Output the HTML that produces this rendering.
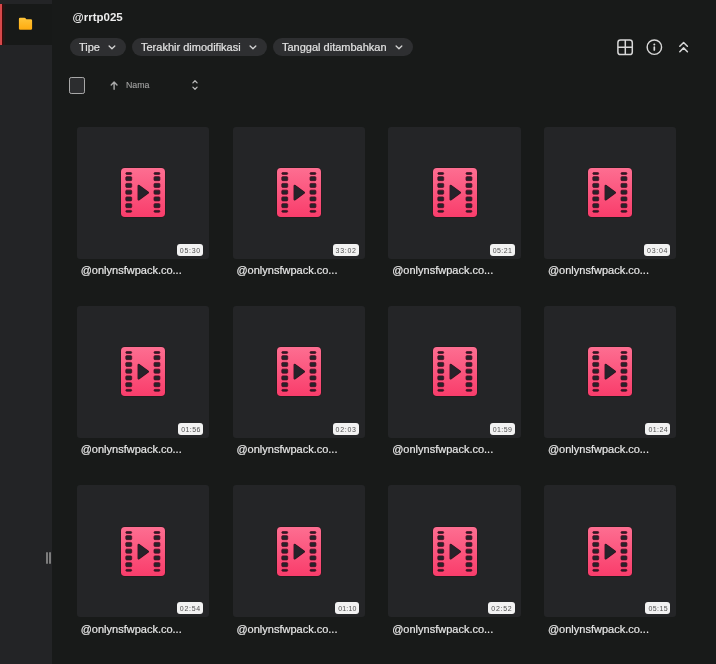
<!DOCTYPE html>
<html><head><meta charset="utf-8"><style>
*{margin:0;padding:0;box-sizing:border-box}
html,body{width:716px;height:664px;overflow:hidden;background:#181a19;-webkit-font-smoothing:antialiased;font-family:"Liberation Sans",sans-serif}
.sidebar{position:absolute;left:0;top:0;width:52px;height:664px;background:#232426}
.active{position:absolute;left:0;top:4px;width:52px;height:41px;background:#171918}
.redbar{position:absolute;left:0;top:4px;width:2px;height:41px;background:#d6484a}
.abs{position:absolute}
.h1{position:absolute;left:72.5px;top:10.5px;font-size:11.5px;font-weight:bold;color:#ececec}
.chip{position:absolute;top:38px;height:18px;border-radius:9px;background:#2e2f31;color:#e2e2e2;font-size:11px;line-height:18px;padding-left:9px;-webkit-text-stroke:0.2px #e2e2e2}
.chip svg{position:absolute;top:6px}
.card{position:absolute;width:132.3px;height:132px;background:#242527;border-radius:3px}
.film{position:absolute;left:43.4px;top:40.3px}
.badge{position:absolute;right:6px;bottom:3px;width:26px;height:12px;border-radius:3px;background:#f2f2f2;color:#505050;font-size:7px;letter-spacing:0.75px;text-indent:0.75px;line-height:14.2px;text-align:center}
.title{position:absolute;font-size:11px;color:#e6e6e6;line-height:14px;-webkit-text-stroke:0.2px #e6e6e6}
</style></head><body><div id="root" style="position:absolute;left:0;top:0;width:716px;height:664px;will-change:transform">
<div class="sidebar"></div>
<div class="active"></div>
<div class="redbar"></div><div class="abs" style="left:2px;top:4px;width:1px;height:41px;background:#3e0808"></div><div class="abs" style="left:3px;top:4px;width:1.5px;height:41px;background:#241716"></div>
<svg class="abs" style="left:18px;top:17px" width="15" height="14" viewBox="0 0 15 14"><defs><linearGradient id="fg" x1="0" y1="0" x2="0" y2="1"><stop offset="0" stop-color="#ffc53a"/><stop offset="1" stop-color="#ffab0f"/></linearGradient></defs><path d="M0.9 2 Q0.9 0.7 2.2 0.7 L6.3 0.7 Q6.9 0.7 7.3 1.1 L8.3 2.3 L12.8 2.3 Q14.1 2.3 14.1 3.6 L14.1 11.4 Q14.1 12.7 12.8 12.7 L2.2 12.7 Q0.9 12.7 0.9 11.4 Z" fill="url(#fg)"/></svg>
<div class="abs" style="left:45.8px;top:551.8px;width:1.8px;height:12.4px;background:#7c7c7c;border-radius:1px"></div>
<div class="abs" style="left:49px;top:551.8px;width:1.8px;height:12.4px;background:#7c7c7c;border-radius:1px"></div>

<div class="h1">@rrtp025</div>
<div class="chip" style="left:70px;width:56px">Tipe<span></span></div>
<div class="chip" style="left:132px;width:135px">Terakhir dimodifikasi</div>
<div class="chip" style="left:273px;width:140px">Tanggal ditambahkan</div>
<svg class="abs" style="left:107.5px;top:44.5px" width="8" height="5.5" viewBox="0 0 8 5.5"><path d="M1.1 1.0 L3.95 3.75 L6.8 1.0" stroke="#d4d4d4" stroke-width="1.3" fill="none" stroke-linecap="round" stroke-linejoin="round"/></svg>
<svg class="abs" style="left:249.0px;top:44.5px" width="8" height="5.5" viewBox="0 0 8 5.5"><path d="M1.1 1.0 L3.95 3.75 L6.8 1.0" stroke="#d4d4d4" stroke-width="1.3" fill="none" stroke-linecap="round" stroke-linejoin="round"/></svg>
<svg class="abs" style="left:394.5px;top:44.5px" width="8" height="5.5" viewBox="0 0 8 5.5"><path d="M1.1 1.0 L3.95 3.75 L6.8 1.0" stroke="#d4d4d4" stroke-width="1.3" fill="none" stroke-linecap="round" stroke-linejoin="round"/></svg>

<svg class="abs" style="left:616.5px;top:39px" width="17" height="17" viewBox="0 0 17 17"><rect x="0.9" y="1.1" width="14.4" height="14.5" rx="2.6" fill="none" stroke="#d8d8d8" stroke-width="1.5"/><path d="M8.3 1.1V15.6M0.9 8.35H15.3" stroke="#d8d8d8" stroke-width="1.5"/></svg>
<svg class="abs" style="left:645px;top:38px" width="18" height="18" viewBox="0 0 18 18"><circle cx="9.35" cy="9.15" r="7.2" fill="none" stroke="#d8d8d8" stroke-width="1.45"/><circle cx="9.3" cy="6.5" r="1" fill="#d8d8d8"/><path d="M9.3 9V12" stroke="#d8d8d8" stroke-width="1.7" stroke-linecap="round"/></svg>
<svg class="abs" style="left:677px;top:40px" width="13" height="14" viewBox="0 0 13 14"><path d="M2.8 6.3L6.6 2.5L10.4 6.3M2.8 11.7L6.6 7.9L10.4 11.7" stroke="#d8d8d8" stroke-width="1.5" fill="none" stroke-linecap="round" stroke-linejoin="round"/></svg>

<div class="abs" style="left:68.6px;top:76.8px;width:16.7px;height:17.1px;border:1.5px solid #a8a8a8;border-radius:2.2px;background:#2c2d2f"></div>
<svg class="abs" style="left:109.5px;top:81px" width="9" height="10" viewBox="0 0 9 10"><path d="M4.1 8.3V1M1.2 3.9L4.1 1L7 3.9" stroke="#aaa" stroke-width="1.4" fill="none" stroke-linecap="round" stroke-linejoin="round"/></svg>
<div class="abs" style="left:125.7px;top:79.2px;font-size:9.8px;color:#a4a4a4;line-height:12.4px;-webkit-text-stroke:0.1px #a4a4a4;transform:scaleX(0.9);transform-origin:0 0">Nama</div>
<svg class="abs" style="left:190.5px;top:79px" width="8" height="12" viewBox="0 0 8 12"><path d="M1.9 3.9L4 1.7L6.1 3.9M1.9 8.1L4 10.3L6.1 8.1" stroke="#bbb" stroke-width="1.25" fill="none" stroke-linecap="round" stroke-linejoin="round"/></svg>
<div class="card" style="left:76.8px;top:126.7px"><svg class="film" width="46" height="51" viewBox="-1 -1 46 51" style="overflow:visible"><defs><linearGradient id="g0" x1="0" y1="0" x2="0" y2="1"><stop offset="0" stop-color="#fd6e91"/><stop offset="1" stop-color="#f93d6b"/></linearGradient></defs><rect x="-0.5" y="-0.5" width="45" height="50" rx="4.3" fill="#2a1219"/><rect x="0" y="0" width="44" height="49" rx="3.8" fill="url(#g0)"/><rect x="4.8" y="4.6" width="5.9" height="1.8" rx="0.9" fill="#26232a" stroke="#4a0c22" stroke-width="0.8"/><rect x="4.8" y="8.65" width="5.9" height="4.0" rx="0.9" fill="#26232a" stroke="#4a0c22" stroke-width="0.8"/><rect x="4.8" y="15.4" width="5.9" height="4.0" rx="0.9" fill="#26232a" stroke="#4a0c22" stroke-width="0.8"/><rect x="4.8" y="22.15" width="5.9" height="4.0" rx="0.9" fill="#26232a" stroke="#4a0c22" stroke-width="0.8"/><rect x="4.8" y="28.9" width="5.9" height="4.0" rx="0.9" fill="#26232a" stroke="#4a0c22" stroke-width="0.8"/><rect x="4.8" y="35.65" width="5.9" height="4.0" rx="0.9" fill="#26232a" stroke="#4a0c22" stroke-width="0.8"/><rect x="4.8" y="42.4" width="5.9" height="1.8" rx="0.9" fill="#26232a" stroke="#4a0c22" stroke-width="0.8"/><rect x="33.0" y="4.6" width="5.9" height="1.8" rx="0.9" fill="#26232a" stroke="#4a0c22" stroke-width="0.8"/><rect x="33.0" y="8.65" width="5.9" height="4.0" rx="0.9" fill="#26232a" stroke="#4a0c22" stroke-width="0.8"/><rect x="33.0" y="15.4" width="5.9" height="4.0" rx="0.9" fill="#26232a" stroke="#4a0c22" stroke-width="0.8"/><rect x="33.0" y="22.15" width="5.9" height="4.0" rx="0.9" fill="#26232a" stroke="#4a0c22" stroke-width="0.8"/><rect x="33.0" y="28.9" width="5.9" height="4.0" rx="0.9" fill="#26232a" stroke="#4a0c22" stroke-width="0.8"/><rect x="33.0" y="35.65" width="5.9" height="4.0" rx="0.9" fill="#26232a" stroke="#4a0c22" stroke-width="0.8"/><rect x="33.0" y="42.4" width="5.9" height="1.8" rx="0.9" fill="#26232a" stroke="#4a0c22" stroke-width="0.8"/><path d="M17.7 17.9 L26.9 24.6 L17.7 31.4 Z" fill="#26232a" stroke="#3a0c1c" stroke-width="2.3" stroke-linejoin="round"/><path d="M17.7 17.9 L26.9 24.6 L17.7 31.4 Z" fill="#26232a" stroke="#26232a" stroke-width="1.3" stroke-linejoin="round"/></svg><div class="badge" style="width:26.2px;letter-spacing:0.75px">05:30</div></div><div class="title" style="left:80.70px;top:262.90px">@onlynsfwpack.co...</div><div class="card" style="left:232.55px;top:126.7px"><svg class="film" width="46" height="51" viewBox="-1 -1 46 51" style="overflow:visible"><defs><linearGradient id="g1" x1="0" y1="0" x2="0" y2="1"><stop offset="0" stop-color="#fd6e91"/><stop offset="1" stop-color="#f93d6b"/></linearGradient></defs><rect x="-0.5" y="-0.5" width="45" height="50" rx="4.3" fill="#2a1219"/><rect x="0" y="0" width="44" height="49" rx="3.8" fill="url(#g1)"/><rect x="4.8" y="4.6" width="5.9" height="1.8" rx="0.9" fill="#26232a" stroke="#4a0c22" stroke-width="0.8"/><rect x="4.8" y="8.65" width="5.9" height="4.0" rx="0.9" fill="#26232a" stroke="#4a0c22" stroke-width="0.8"/><rect x="4.8" y="15.4" width="5.9" height="4.0" rx="0.9" fill="#26232a" stroke="#4a0c22" stroke-width="0.8"/><rect x="4.8" y="22.15" width="5.9" height="4.0" rx="0.9" fill="#26232a" stroke="#4a0c22" stroke-width="0.8"/><rect x="4.8" y="28.9" width="5.9" height="4.0" rx="0.9" fill="#26232a" stroke="#4a0c22" stroke-width="0.8"/><rect x="4.8" y="35.65" width="5.9" height="4.0" rx="0.9" fill="#26232a" stroke="#4a0c22" stroke-width="0.8"/><rect x="4.8" y="42.4" width="5.9" height="1.8" rx="0.9" fill="#26232a" stroke="#4a0c22" stroke-width="0.8"/><rect x="33.0" y="4.6" width="5.9" height="1.8" rx="0.9" fill="#26232a" stroke="#4a0c22" stroke-width="0.8"/><rect x="33.0" y="8.65" width="5.9" height="4.0" rx="0.9" fill="#26232a" stroke="#4a0c22" stroke-width="0.8"/><rect x="33.0" y="15.4" width="5.9" height="4.0" rx="0.9" fill="#26232a" stroke="#4a0c22" stroke-width="0.8"/><rect x="33.0" y="22.15" width="5.9" height="4.0" rx="0.9" fill="#26232a" stroke="#4a0c22" stroke-width="0.8"/><rect x="33.0" y="28.9" width="5.9" height="4.0" rx="0.9" fill="#26232a" stroke="#4a0c22" stroke-width="0.8"/><rect x="33.0" y="35.65" width="5.9" height="4.0" rx="0.9" fill="#26232a" stroke="#4a0c22" stroke-width="0.8"/><rect x="33.0" y="42.4" width="5.9" height="1.8" rx="0.9" fill="#26232a" stroke="#4a0c22" stroke-width="0.8"/><path d="M17.7 17.9 L26.9 24.6 L17.7 31.4 Z" fill="#26232a" stroke="#3a0c1c" stroke-width="2.3" stroke-linejoin="round"/><path d="M17.7 17.9 L26.9 24.6 L17.7 31.4 Z" fill="#26232a" stroke="#26232a" stroke-width="1.3" stroke-linejoin="round"/></svg><div class="badge" style="width:26.2px;letter-spacing:0.75px">33:02</div></div><div class="title" style="left:236.45px;top:262.90px">@onlynsfwpack.co...</div><div class="card" style="left:388.3px;top:126.7px"><svg class="film" width="46" height="51" viewBox="-1 -1 46 51" style="overflow:visible"><defs><linearGradient id="g2" x1="0" y1="0" x2="0" y2="1"><stop offset="0" stop-color="#fd6e91"/><stop offset="1" stop-color="#f93d6b"/></linearGradient></defs><rect x="-0.5" y="-0.5" width="45" height="50" rx="4.3" fill="#2a1219"/><rect x="0" y="0" width="44" height="49" rx="3.8" fill="url(#g2)"/><rect x="4.8" y="4.6" width="5.9" height="1.8" rx="0.9" fill="#26232a" stroke="#4a0c22" stroke-width="0.8"/><rect x="4.8" y="8.65" width="5.9" height="4.0" rx="0.9" fill="#26232a" stroke="#4a0c22" stroke-width="0.8"/><rect x="4.8" y="15.4" width="5.9" height="4.0" rx="0.9" fill="#26232a" stroke="#4a0c22" stroke-width="0.8"/><rect x="4.8" y="22.15" width="5.9" height="4.0" rx="0.9" fill="#26232a" stroke="#4a0c22" stroke-width="0.8"/><rect x="4.8" y="28.9" width="5.9" height="4.0" rx="0.9" fill="#26232a" stroke="#4a0c22" stroke-width="0.8"/><rect x="4.8" y="35.65" width="5.9" height="4.0" rx="0.9" fill="#26232a" stroke="#4a0c22" stroke-width="0.8"/><rect x="4.8" y="42.4" width="5.9" height="1.8" rx="0.9" fill="#26232a" stroke="#4a0c22" stroke-width="0.8"/><rect x="33.0" y="4.6" width="5.9" height="1.8" rx="0.9" fill="#26232a" stroke="#4a0c22" stroke-width="0.8"/><rect x="33.0" y="8.65" width="5.9" height="4.0" rx="0.9" fill="#26232a" stroke="#4a0c22" stroke-width="0.8"/><rect x="33.0" y="15.4" width="5.9" height="4.0" rx="0.9" fill="#26232a" stroke="#4a0c22" stroke-width="0.8"/><rect x="33.0" y="22.15" width="5.9" height="4.0" rx="0.9" fill="#26232a" stroke="#4a0c22" stroke-width="0.8"/><rect x="33.0" y="28.9" width="5.9" height="4.0" rx="0.9" fill="#26232a" stroke="#4a0c22" stroke-width="0.8"/><rect x="33.0" y="35.65" width="5.9" height="4.0" rx="0.9" fill="#26232a" stroke="#4a0c22" stroke-width="0.8"/><rect x="33.0" y="42.4" width="5.9" height="1.8" rx="0.9" fill="#26232a" stroke="#4a0c22" stroke-width="0.8"/><path d="M17.7 17.9 L26.9 24.6 L17.7 31.4 Z" fill="#26232a" stroke="#3a0c1c" stroke-width="2.3" stroke-linejoin="round"/><path d="M17.7 17.9 L26.9 24.6 L17.7 31.4 Z" fill="#26232a" stroke="#26232a" stroke-width="1.3" stroke-linejoin="round"/></svg><div class="badge" style="width:24.9px;letter-spacing:0.45px">05:21</div></div><div class="title" style="left:392.20px;top:262.90px">@onlynsfwpack.co...</div><div class="card" style="left:544.05px;top:126.7px"><svg class="film" width="46" height="51" viewBox="-1 -1 46 51" style="overflow:visible"><defs><linearGradient id="g3" x1="0" y1="0" x2="0" y2="1"><stop offset="0" stop-color="#fd6e91"/><stop offset="1" stop-color="#f93d6b"/></linearGradient></defs><rect x="-0.5" y="-0.5" width="45" height="50" rx="4.3" fill="#2a1219"/><rect x="0" y="0" width="44" height="49" rx="3.8" fill="url(#g3)"/><rect x="4.8" y="4.6" width="5.9" height="1.8" rx="0.9" fill="#26232a" stroke="#4a0c22" stroke-width="0.8"/><rect x="4.8" y="8.65" width="5.9" height="4.0" rx="0.9" fill="#26232a" stroke="#4a0c22" stroke-width="0.8"/><rect x="4.8" y="15.4" width="5.9" height="4.0" rx="0.9" fill="#26232a" stroke="#4a0c22" stroke-width="0.8"/><rect x="4.8" y="22.15" width="5.9" height="4.0" rx="0.9" fill="#26232a" stroke="#4a0c22" stroke-width="0.8"/><rect x="4.8" y="28.9" width="5.9" height="4.0" rx="0.9" fill="#26232a" stroke="#4a0c22" stroke-width="0.8"/><rect x="4.8" y="35.65" width="5.9" height="4.0" rx="0.9" fill="#26232a" stroke="#4a0c22" stroke-width="0.8"/><rect x="4.8" y="42.4" width="5.9" height="1.8" rx="0.9" fill="#26232a" stroke="#4a0c22" stroke-width="0.8"/><rect x="33.0" y="4.6" width="5.9" height="1.8" rx="0.9" fill="#26232a" stroke="#4a0c22" stroke-width="0.8"/><rect x="33.0" y="8.65" width="5.9" height="4.0" rx="0.9" fill="#26232a" stroke="#4a0c22" stroke-width="0.8"/><rect x="33.0" y="15.4" width="5.9" height="4.0" rx="0.9" fill="#26232a" stroke="#4a0c22" stroke-width="0.8"/><rect x="33.0" y="22.15" width="5.9" height="4.0" rx="0.9" fill="#26232a" stroke="#4a0c22" stroke-width="0.8"/><rect x="33.0" y="28.9" width="5.9" height="4.0" rx="0.9" fill="#26232a" stroke="#4a0c22" stroke-width="0.8"/><rect x="33.0" y="35.65" width="5.9" height="4.0" rx="0.9" fill="#26232a" stroke="#4a0c22" stroke-width="0.8"/><rect x="33.0" y="42.4" width="5.9" height="1.8" rx="0.9" fill="#26232a" stroke="#4a0c22" stroke-width="0.8"/><path d="M17.7 17.9 L26.9 24.6 L17.7 31.4 Z" fill="#26232a" stroke="#3a0c1c" stroke-width="2.3" stroke-linejoin="round"/><path d="M17.7 17.9 L26.9 24.6 L17.7 31.4 Z" fill="#26232a" stroke="#26232a" stroke-width="1.3" stroke-linejoin="round"/></svg><div class="badge" style="width:26.2px;letter-spacing:0.75px">03:04</div></div><div class="title" style="left:547.95px;top:262.90px">@onlynsfwpack.co...</div><div class="card" style="left:76.8px;top:306.05px"><svg class="film" width="46" height="51" viewBox="-1 -1 46 51" style="overflow:visible"><defs><linearGradient id="g4" x1="0" y1="0" x2="0" y2="1"><stop offset="0" stop-color="#fd6e91"/><stop offset="1" stop-color="#f93d6b"/></linearGradient></defs><rect x="-0.5" y="-0.5" width="45" height="50" rx="4.3" fill="#2a1219"/><rect x="0" y="0" width="44" height="49" rx="3.8" fill="url(#g4)"/><rect x="4.8" y="4.6" width="5.9" height="1.8" rx="0.9" fill="#26232a" stroke="#4a0c22" stroke-width="0.8"/><rect x="4.8" y="8.65" width="5.9" height="4.0" rx="0.9" fill="#26232a" stroke="#4a0c22" stroke-width="0.8"/><rect x="4.8" y="15.4" width="5.9" height="4.0" rx="0.9" fill="#26232a" stroke="#4a0c22" stroke-width="0.8"/><rect x="4.8" y="22.15" width="5.9" height="4.0" rx="0.9" fill="#26232a" stroke="#4a0c22" stroke-width="0.8"/><rect x="4.8" y="28.9" width="5.9" height="4.0" rx="0.9" fill="#26232a" stroke="#4a0c22" stroke-width="0.8"/><rect x="4.8" y="35.65" width="5.9" height="4.0" rx="0.9" fill="#26232a" stroke="#4a0c22" stroke-width="0.8"/><rect x="4.8" y="42.4" width="5.9" height="1.8" rx="0.9" fill="#26232a" stroke="#4a0c22" stroke-width="0.8"/><rect x="33.0" y="4.6" width="5.9" height="1.8" rx="0.9" fill="#26232a" stroke="#4a0c22" stroke-width="0.8"/><rect x="33.0" y="8.65" width="5.9" height="4.0" rx="0.9" fill="#26232a" stroke="#4a0c22" stroke-width="0.8"/><rect x="33.0" y="15.4" width="5.9" height="4.0" rx="0.9" fill="#26232a" stroke="#4a0c22" stroke-width="0.8"/><rect x="33.0" y="22.15" width="5.9" height="4.0" rx="0.9" fill="#26232a" stroke="#4a0c22" stroke-width="0.8"/><rect x="33.0" y="28.9" width="5.9" height="4.0" rx="0.9" fill="#26232a" stroke="#4a0c22" stroke-width="0.8"/><rect x="33.0" y="35.65" width="5.9" height="4.0" rx="0.9" fill="#26232a" stroke="#4a0c22" stroke-width="0.8"/><rect x="33.0" y="42.4" width="5.9" height="1.8" rx="0.9" fill="#26232a" stroke="#4a0c22" stroke-width="0.8"/><path d="M17.7 17.9 L26.9 24.6 L17.7 31.4 Z" fill="#26232a" stroke="#3a0c1c" stroke-width="2.3" stroke-linejoin="round"/><path d="M17.7 17.9 L26.9 24.6 L17.7 31.4 Z" fill="#26232a" stroke="#26232a" stroke-width="1.3" stroke-linejoin="round"/></svg><div class="badge" style="width:24.9px;letter-spacing:0.45px">01:56</div></div><div class="title" style="left:80.70px;top:442.25px">@onlynsfwpack.co...</div><div class="card" style="left:232.55px;top:306.05px"><svg class="film" width="46" height="51" viewBox="-1 -1 46 51" style="overflow:visible"><defs><linearGradient id="g5" x1="0" y1="0" x2="0" y2="1"><stop offset="0" stop-color="#fd6e91"/><stop offset="1" stop-color="#f93d6b"/></linearGradient></defs><rect x="-0.5" y="-0.5" width="45" height="50" rx="4.3" fill="#2a1219"/><rect x="0" y="0" width="44" height="49" rx="3.8" fill="url(#g5)"/><rect x="4.8" y="4.6" width="5.9" height="1.8" rx="0.9" fill="#26232a" stroke="#4a0c22" stroke-width="0.8"/><rect x="4.8" y="8.65" width="5.9" height="4.0" rx="0.9" fill="#26232a" stroke="#4a0c22" stroke-width="0.8"/><rect x="4.8" y="15.4" width="5.9" height="4.0" rx="0.9" fill="#26232a" stroke="#4a0c22" stroke-width="0.8"/><rect x="4.8" y="22.15" width="5.9" height="4.0" rx="0.9" fill="#26232a" stroke="#4a0c22" stroke-width="0.8"/><rect x="4.8" y="28.9" width="5.9" height="4.0" rx="0.9" fill="#26232a" stroke="#4a0c22" stroke-width="0.8"/><rect x="4.8" y="35.65" width="5.9" height="4.0" rx="0.9" fill="#26232a" stroke="#4a0c22" stroke-width="0.8"/><rect x="4.8" y="42.4" width="5.9" height="1.8" rx="0.9" fill="#26232a" stroke="#4a0c22" stroke-width="0.8"/><rect x="33.0" y="4.6" width="5.9" height="1.8" rx="0.9" fill="#26232a" stroke="#4a0c22" stroke-width="0.8"/><rect x="33.0" y="8.65" width="5.9" height="4.0" rx="0.9" fill="#26232a" stroke="#4a0c22" stroke-width="0.8"/><rect x="33.0" y="15.4" width="5.9" height="4.0" rx="0.9" fill="#26232a" stroke="#4a0c22" stroke-width="0.8"/><rect x="33.0" y="22.15" width="5.9" height="4.0" rx="0.9" fill="#26232a" stroke="#4a0c22" stroke-width="0.8"/><rect x="33.0" y="28.9" width="5.9" height="4.0" rx="0.9" fill="#26232a" stroke="#4a0c22" stroke-width="0.8"/><rect x="33.0" y="35.65" width="5.9" height="4.0" rx="0.9" fill="#26232a" stroke="#4a0c22" stroke-width="0.8"/><rect x="33.0" y="42.4" width="5.9" height="1.8" rx="0.9" fill="#26232a" stroke="#4a0c22" stroke-width="0.8"/><path d="M17.7 17.9 L26.9 24.6 L17.7 31.4 Z" fill="#26232a" stroke="#3a0c1c" stroke-width="2.3" stroke-linejoin="round"/><path d="M17.7 17.9 L26.9 24.6 L17.7 31.4 Z" fill="#26232a" stroke="#26232a" stroke-width="1.3" stroke-linejoin="round"/></svg><div class="badge" style="width:26.2px;letter-spacing:0.75px">02:03</div></div><div class="title" style="left:236.45px;top:442.25px">@onlynsfwpack.co...</div><div class="card" style="left:388.3px;top:306.05px"><svg class="film" width="46" height="51" viewBox="-1 -1 46 51" style="overflow:visible"><defs><linearGradient id="g6" x1="0" y1="0" x2="0" y2="1"><stop offset="0" stop-color="#fd6e91"/><stop offset="1" stop-color="#f93d6b"/></linearGradient></defs><rect x="-0.5" y="-0.5" width="45" height="50" rx="4.3" fill="#2a1219"/><rect x="0" y="0" width="44" height="49" rx="3.8" fill="url(#g6)"/><rect x="4.8" y="4.6" width="5.9" height="1.8" rx="0.9" fill="#26232a" stroke="#4a0c22" stroke-width="0.8"/><rect x="4.8" y="8.65" width="5.9" height="4.0" rx="0.9" fill="#26232a" stroke="#4a0c22" stroke-width="0.8"/><rect x="4.8" y="15.4" width="5.9" height="4.0" rx="0.9" fill="#26232a" stroke="#4a0c22" stroke-width="0.8"/><rect x="4.8" y="22.15" width="5.9" height="4.0" rx="0.9" fill="#26232a" stroke="#4a0c22" stroke-width="0.8"/><rect x="4.8" y="28.9" width="5.9" height="4.0" rx="0.9" fill="#26232a" stroke="#4a0c22" stroke-width="0.8"/><rect x="4.8" y="35.65" width="5.9" height="4.0" rx="0.9" fill="#26232a" stroke="#4a0c22" stroke-width="0.8"/><rect x="4.8" y="42.4" width="5.9" height="1.8" rx="0.9" fill="#26232a" stroke="#4a0c22" stroke-width="0.8"/><rect x="33.0" y="4.6" width="5.9" height="1.8" rx="0.9" fill="#26232a" stroke="#4a0c22" stroke-width="0.8"/><rect x="33.0" y="8.65" width="5.9" height="4.0" rx="0.9" fill="#26232a" stroke="#4a0c22" stroke-width="0.8"/><rect x="33.0" y="15.4" width="5.9" height="4.0" rx="0.9" fill="#26232a" stroke="#4a0c22" stroke-width="0.8"/><rect x="33.0" y="22.15" width="5.9" height="4.0" rx="0.9" fill="#26232a" stroke="#4a0c22" stroke-width="0.8"/><rect x="33.0" y="28.9" width="5.9" height="4.0" rx="0.9" fill="#26232a" stroke="#4a0c22" stroke-width="0.8"/><rect x="33.0" y="35.65" width="5.9" height="4.0" rx="0.9" fill="#26232a" stroke="#4a0c22" stroke-width="0.8"/><rect x="33.0" y="42.4" width="5.9" height="1.8" rx="0.9" fill="#26232a" stroke="#4a0c22" stroke-width="0.8"/><path d="M17.7 17.9 L26.9 24.6 L17.7 31.4 Z" fill="#26232a" stroke="#3a0c1c" stroke-width="2.3" stroke-linejoin="round"/><path d="M17.7 17.9 L26.9 24.6 L17.7 31.4 Z" fill="#26232a" stroke="#26232a" stroke-width="1.3" stroke-linejoin="round"/></svg><div class="badge" style="width:24.9px;letter-spacing:0.45px">01:59</div></div><div class="title" style="left:392.20px;top:442.25px">@onlynsfwpack.co...</div><div class="card" style="left:544.05px;top:306.05px"><svg class="film" width="46" height="51" viewBox="-1 -1 46 51" style="overflow:visible"><defs><linearGradient id="g7" x1="0" y1="0" x2="0" y2="1"><stop offset="0" stop-color="#fd6e91"/><stop offset="1" stop-color="#f93d6b"/></linearGradient></defs><rect x="-0.5" y="-0.5" width="45" height="50" rx="4.3" fill="#2a1219"/><rect x="0" y="0" width="44" height="49" rx="3.8" fill="url(#g7)"/><rect x="4.8" y="4.6" width="5.9" height="1.8" rx="0.9" fill="#26232a" stroke="#4a0c22" stroke-width="0.8"/><rect x="4.8" y="8.65" width="5.9" height="4.0" rx="0.9" fill="#26232a" stroke="#4a0c22" stroke-width="0.8"/><rect x="4.8" y="15.4" width="5.9" height="4.0" rx="0.9" fill="#26232a" stroke="#4a0c22" stroke-width="0.8"/><rect x="4.8" y="22.15" width="5.9" height="4.0" rx="0.9" fill="#26232a" stroke="#4a0c22" stroke-width="0.8"/><rect x="4.8" y="28.9" width="5.9" height="4.0" rx="0.9" fill="#26232a" stroke="#4a0c22" stroke-width="0.8"/><rect x="4.8" y="35.65" width="5.9" height="4.0" rx="0.9" fill="#26232a" stroke="#4a0c22" stroke-width="0.8"/><rect x="4.8" y="42.4" width="5.9" height="1.8" rx="0.9" fill="#26232a" stroke="#4a0c22" stroke-width="0.8"/><rect x="33.0" y="4.6" width="5.9" height="1.8" rx="0.9" fill="#26232a" stroke="#4a0c22" stroke-width="0.8"/><rect x="33.0" y="8.65" width="5.9" height="4.0" rx="0.9" fill="#26232a" stroke="#4a0c22" stroke-width="0.8"/><rect x="33.0" y="15.4" width="5.9" height="4.0" rx="0.9" fill="#26232a" stroke="#4a0c22" stroke-width="0.8"/><rect x="33.0" y="22.15" width="5.9" height="4.0" rx="0.9" fill="#26232a" stroke="#4a0c22" stroke-width="0.8"/><rect x="33.0" y="28.9" width="5.9" height="4.0" rx="0.9" fill="#26232a" stroke="#4a0c22" stroke-width="0.8"/><rect x="33.0" y="35.65" width="5.9" height="4.0" rx="0.9" fill="#26232a" stroke="#4a0c22" stroke-width="0.8"/><rect x="33.0" y="42.4" width="5.9" height="1.8" rx="0.9" fill="#26232a" stroke="#4a0c22" stroke-width="0.8"/><path d="M17.7 17.9 L26.9 24.6 L17.7 31.4 Z" fill="#26232a" stroke="#3a0c1c" stroke-width="2.3" stroke-linejoin="round"/><path d="M17.7 17.9 L26.9 24.6 L17.7 31.4 Z" fill="#26232a" stroke="#26232a" stroke-width="1.3" stroke-linejoin="round"/></svg><div class="badge" style="width:24.9px;letter-spacing:0.45px">01:24</div></div><div class="title" style="left:547.95px;top:442.25px">@onlynsfwpack.co...</div><div class="card" style="left:76.8px;top:485.4px"><svg class="film" width="46" height="51" viewBox="-1 -1 46 51" style="overflow:visible"><defs><linearGradient id="g8" x1="0" y1="0" x2="0" y2="1"><stop offset="0" stop-color="#fd6e91"/><stop offset="1" stop-color="#f93d6b"/></linearGradient></defs><rect x="-0.5" y="-0.5" width="45" height="50" rx="4.3" fill="#2a1219"/><rect x="0" y="0" width="44" height="49" rx="3.8" fill="url(#g8)"/><rect x="4.8" y="4.6" width="5.9" height="1.8" rx="0.9" fill="#26232a" stroke="#4a0c22" stroke-width="0.8"/><rect x="4.8" y="8.65" width="5.9" height="4.0" rx="0.9" fill="#26232a" stroke="#4a0c22" stroke-width="0.8"/><rect x="4.8" y="15.4" width="5.9" height="4.0" rx="0.9" fill="#26232a" stroke="#4a0c22" stroke-width="0.8"/><rect x="4.8" y="22.15" width="5.9" height="4.0" rx="0.9" fill="#26232a" stroke="#4a0c22" stroke-width="0.8"/><rect x="4.8" y="28.9" width="5.9" height="4.0" rx="0.9" fill="#26232a" stroke="#4a0c22" stroke-width="0.8"/><rect x="4.8" y="35.65" width="5.9" height="4.0" rx="0.9" fill="#26232a" stroke="#4a0c22" stroke-width="0.8"/><rect x="4.8" y="42.4" width="5.9" height="1.8" rx="0.9" fill="#26232a" stroke="#4a0c22" stroke-width="0.8"/><rect x="33.0" y="4.6" width="5.9" height="1.8" rx="0.9" fill="#26232a" stroke="#4a0c22" stroke-width="0.8"/><rect x="33.0" y="8.65" width="5.9" height="4.0" rx="0.9" fill="#26232a" stroke="#4a0c22" stroke-width="0.8"/><rect x="33.0" y="15.4" width="5.9" height="4.0" rx="0.9" fill="#26232a" stroke="#4a0c22" stroke-width="0.8"/><rect x="33.0" y="22.15" width="5.9" height="4.0" rx="0.9" fill="#26232a" stroke="#4a0c22" stroke-width="0.8"/><rect x="33.0" y="28.9" width="5.9" height="4.0" rx="0.9" fill="#26232a" stroke="#4a0c22" stroke-width="0.8"/><rect x="33.0" y="35.65" width="5.9" height="4.0" rx="0.9" fill="#26232a" stroke="#4a0c22" stroke-width="0.8"/><rect x="33.0" y="42.4" width="5.9" height="1.8" rx="0.9" fill="#26232a" stroke="#4a0c22" stroke-width="0.8"/><path d="M17.7 17.9 L26.9 24.6 L17.7 31.4 Z" fill="#26232a" stroke="#3a0c1c" stroke-width="2.3" stroke-linejoin="round"/><path d="M17.7 17.9 L26.9 24.6 L17.7 31.4 Z" fill="#26232a" stroke="#26232a" stroke-width="1.3" stroke-linejoin="round"/></svg><div class="badge" style="width:26.2px;letter-spacing:0.75px">02:54</div></div><div class="title" style="left:80.70px;top:621.60px">@onlynsfwpack.co...</div><div class="card" style="left:232.55px;top:485.4px"><svg class="film" width="46" height="51" viewBox="-1 -1 46 51" style="overflow:visible"><defs><linearGradient id="g9" x1="0" y1="0" x2="0" y2="1"><stop offset="0" stop-color="#fd6e91"/><stop offset="1" stop-color="#f93d6b"/></linearGradient></defs><rect x="-0.5" y="-0.5" width="45" height="50" rx="4.3" fill="#2a1219"/><rect x="0" y="0" width="44" height="49" rx="3.8" fill="url(#g9)"/><rect x="4.8" y="4.6" width="5.9" height="1.8" rx="0.9" fill="#26232a" stroke="#4a0c22" stroke-width="0.8"/><rect x="4.8" y="8.65" width="5.9" height="4.0" rx="0.9" fill="#26232a" stroke="#4a0c22" stroke-width="0.8"/><rect x="4.8" y="15.4" width="5.9" height="4.0" rx="0.9" fill="#26232a" stroke="#4a0c22" stroke-width="0.8"/><rect x="4.8" y="22.15" width="5.9" height="4.0" rx="0.9" fill="#26232a" stroke="#4a0c22" stroke-width="0.8"/><rect x="4.8" y="28.9" width="5.9" height="4.0" rx="0.9" fill="#26232a" stroke="#4a0c22" stroke-width="0.8"/><rect x="4.8" y="35.65" width="5.9" height="4.0" rx="0.9" fill="#26232a" stroke="#4a0c22" stroke-width="0.8"/><rect x="4.8" y="42.4" width="5.9" height="1.8" rx="0.9" fill="#26232a" stroke="#4a0c22" stroke-width="0.8"/><rect x="33.0" y="4.6" width="5.9" height="1.8" rx="0.9" fill="#26232a" stroke="#4a0c22" stroke-width="0.8"/><rect x="33.0" y="8.65" width="5.9" height="4.0" rx="0.9" fill="#26232a" stroke="#4a0c22" stroke-width="0.8"/><rect x="33.0" y="15.4" width="5.9" height="4.0" rx="0.9" fill="#26232a" stroke="#4a0c22" stroke-width="0.8"/><rect x="33.0" y="22.15" width="5.9" height="4.0" rx="0.9" fill="#26232a" stroke="#4a0c22" stroke-width="0.8"/><rect x="33.0" y="28.9" width="5.9" height="4.0" rx="0.9" fill="#26232a" stroke="#4a0c22" stroke-width="0.8"/><rect x="33.0" y="35.65" width="5.9" height="4.0" rx="0.9" fill="#26232a" stroke="#4a0c22" stroke-width="0.8"/><rect x="33.0" y="42.4" width="5.9" height="1.8" rx="0.9" fill="#26232a" stroke="#4a0c22" stroke-width="0.8"/><path d="M17.7 17.9 L26.9 24.6 L17.7 31.4 Z" fill="#26232a" stroke="#3a0c1c" stroke-width="2.3" stroke-linejoin="round"/><path d="M17.7 17.9 L26.9 24.6 L17.7 31.4 Z" fill="#26232a" stroke="#26232a" stroke-width="1.3" stroke-linejoin="round"/></svg><div class="badge" style="width:23.6px;letter-spacing:0.15px">01:10</div></div><div class="title" style="left:236.45px;top:621.60px">@onlynsfwpack.co...</div><div class="card" style="left:388.3px;top:485.4px"><svg class="film" width="46" height="51" viewBox="-1 -1 46 51" style="overflow:visible"><defs><linearGradient id="g10" x1="0" y1="0" x2="0" y2="1"><stop offset="0" stop-color="#fd6e91"/><stop offset="1" stop-color="#f93d6b"/></linearGradient></defs><rect x="-0.5" y="-0.5" width="45" height="50" rx="4.3" fill="#2a1219"/><rect x="0" y="0" width="44" height="49" rx="3.8" fill="url(#g10)"/><rect x="4.8" y="4.6" width="5.9" height="1.8" rx="0.9" fill="#26232a" stroke="#4a0c22" stroke-width="0.8"/><rect x="4.8" y="8.65" width="5.9" height="4.0" rx="0.9" fill="#26232a" stroke="#4a0c22" stroke-width="0.8"/><rect x="4.8" y="15.4" width="5.9" height="4.0" rx="0.9" fill="#26232a" stroke="#4a0c22" stroke-width="0.8"/><rect x="4.8" y="22.15" width="5.9" height="4.0" rx="0.9" fill="#26232a" stroke="#4a0c22" stroke-width="0.8"/><rect x="4.8" y="28.9" width="5.9" height="4.0" rx="0.9" fill="#26232a" stroke="#4a0c22" stroke-width="0.8"/><rect x="4.8" y="35.65" width="5.9" height="4.0" rx="0.9" fill="#26232a" stroke="#4a0c22" stroke-width="0.8"/><rect x="4.8" y="42.4" width="5.9" height="1.8" rx="0.9" fill="#26232a" stroke="#4a0c22" stroke-width="0.8"/><rect x="33.0" y="4.6" width="5.9" height="1.8" rx="0.9" fill="#26232a" stroke="#4a0c22" stroke-width="0.8"/><rect x="33.0" y="8.65" width="5.9" height="4.0" rx="0.9" fill="#26232a" stroke="#4a0c22" stroke-width="0.8"/><rect x="33.0" y="15.4" width="5.9" height="4.0" rx="0.9" fill="#26232a" stroke="#4a0c22" stroke-width="0.8"/><rect x="33.0" y="22.15" width="5.9" height="4.0" rx="0.9" fill="#26232a" stroke="#4a0c22" stroke-width="0.8"/><rect x="33.0" y="28.9" width="5.9" height="4.0" rx="0.9" fill="#26232a" stroke="#4a0c22" stroke-width="0.8"/><rect x="33.0" y="35.65" width="5.9" height="4.0" rx="0.9" fill="#26232a" stroke="#4a0c22" stroke-width="0.8"/><rect x="33.0" y="42.4" width="5.9" height="1.8" rx="0.9" fill="#26232a" stroke="#4a0c22" stroke-width="0.8"/><path d="M17.7 17.9 L26.9 24.6 L17.7 31.4 Z" fill="#26232a" stroke="#3a0c1c" stroke-width="2.3" stroke-linejoin="round"/><path d="M17.7 17.9 L26.9 24.6 L17.7 31.4 Z" fill="#26232a" stroke="#26232a" stroke-width="1.3" stroke-linejoin="round"/></svg><div class="badge" style="width:26.2px;letter-spacing:0.75px">02:52</div></div><div class="title" style="left:392.20px;top:621.60px">@onlynsfwpack.co...</div><div class="card" style="left:544.05px;top:485.4px"><svg class="film" width="46" height="51" viewBox="-1 -1 46 51" style="overflow:visible"><defs><linearGradient id="g11" x1="0" y1="0" x2="0" y2="1"><stop offset="0" stop-color="#fd6e91"/><stop offset="1" stop-color="#f93d6b"/></linearGradient></defs><rect x="-0.5" y="-0.5" width="45" height="50" rx="4.3" fill="#2a1219"/><rect x="0" y="0" width="44" height="49" rx="3.8" fill="url(#g11)"/><rect x="4.8" y="4.6" width="5.9" height="1.8" rx="0.9" fill="#26232a" stroke="#4a0c22" stroke-width="0.8"/><rect x="4.8" y="8.65" width="5.9" height="4.0" rx="0.9" fill="#26232a" stroke="#4a0c22" stroke-width="0.8"/><rect x="4.8" y="15.4" width="5.9" height="4.0" rx="0.9" fill="#26232a" stroke="#4a0c22" stroke-width="0.8"/><rect x="4.8" y="22.15" width="5.9" height="4.0" rx="0.9" fill="#26232a" stroke="#4a0c22" stroke-width="0.8"/><rect x="4.8" y="28.9" width="5.9" height="4.0" rx="0.9" fill="#26232a" stroke="#4a0c22" stroke-width="0.8"/><rect x="4.8" y="35.65" width="5.9" height="4.0" rx="0.9" fill="#26232a" stroke="#4a0c22" stroke-width="0.8"/><rect x="4.8" y="42.4" width="5.9" height="1.8" rx="0.9" fill="#26232a" stroke="#4a0c22" stroke-width="0.8"/><rect x="33.0" y="4.6" width="5.9" height="1.8" rx="0.9" fill="#26232a" stroke="#4a0c22" stroke-width="0.8"/><rect x="33.0" y="8.65" width="5.9" height="4.0" rx="0.9" fill="#26232a" stroke="#4a0c22" stroke-width="0.8"/><rect x="33.0" y="15.4" width="5.9" height="4.0" rx="0.9" fill="#26232a" stroke="#4a0c22" stroke-width="0.8"/><rect x="33.0" y="22.15" width="5.9" height="4.0" rx="0.9" fill="#26232a" stroke="#4a0c22" stroke-width="0.8"/><rect x="33.0" y="28.9" width="5.9" height="4.0" rx="0.9" fill="#26232a" stroke="#4a0c22" stroke-width="0.8"/><rect x="33.0" y="35.65" width="5.9" height="4.0" rx="0.9" fill="#26232a" stroke="#4a0c22" stroke-width="0.8"/><rect x="33.0" y="42.4" width="5.9" height="1.8" rx="0.9" fill="#26232a" stroke="#4a0c22" stroke-width="0.8"/><path d="M17.7 17.9 L26.9 24.6 L17.7 31.4 Z" fill="#26232a" stroke="#3a0c1c" stroke-width="2.3" stroke-linejoin="round"/><path d="M17.7 17.9 L26.9 24.6 L17.7 31.4 Z" fill="#26232a" stroke="#26232a" stroke-width="1.3" stroke-linejoin="round"/></svg><div class="badge" style="width:24.9px;letter-spacing:0.45px">05:15</div></div><div class="title" style="left:547.95px;top:621.60px">@onlynsfwpack.co...</div>
</div></body></html>
